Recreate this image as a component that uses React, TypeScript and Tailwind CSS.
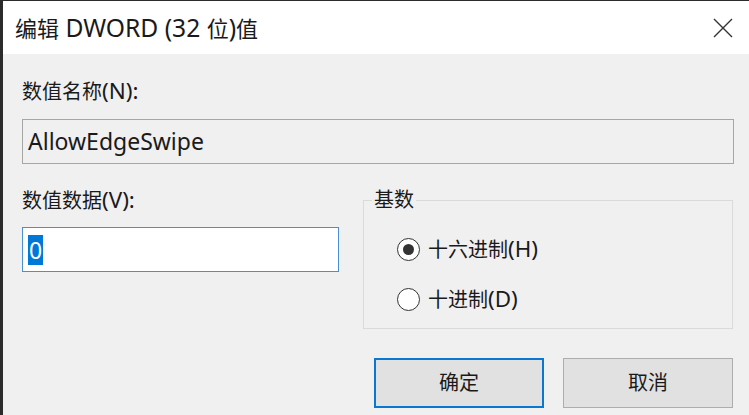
const font = "font-['Noto_Sans','Noto_Sans_CJK_SC','Liberation_Sans',sans-serif]";

// Latin runs are drawn a bit larger, the way Segoe UI sits beside YaHei
function L({ children }: { children: React.ReactNode }) {
  return <span className="text-[1.12em]">{children}</span>;
}

function Radio({ checked, cjk, hotkey }: { checked?: boolean; cjk: string; hotkey: string }) {
  return (
    <label className="flex items-center gap-[8px]">
      <span className="flex h-[23px] w-[23px] items-center justify-center rounded-full border-[1.5px] border-[#333333] bg-white">
        {checked ? <span className="h-[11px] w-[11px] rounded-full bg-[#333333]" /> : null}
      </span>
      <span className="text-[20px] leading-[28px] text-[#1a1a1a]">
        {cjk}
        <L>({hotkey})</L>
      </span>
    </label>
  );
}

export default function App() {
  return (
    <div
      className={`flex h-[415px] w-[749px] flex-col overflow-hidden border-l-[3px] border-t border-[#2b2b2b] bg-[#f0f0f0] ${font}`}
    >
      {/* title bar */}
      <div className="flex h-[53px] shrink-0 items-center justify-between bg-white pl-[12px] pr-[16px]">
        <span className="text-[22px] leading-[30px] text-[#1a1a1a]">
          编辑<L> DWORD (32 </L>位<L>)</L>值
        </span>
        <svg width="20" height="20" viewBox="0 0 20 20" className="text-[#333333]">
          <path d="M1 1 L19 19 M19 1 L1 19" stroke="currentColor" strokeWidth="1.4" fill="none" />
        </svg>
      </div>

      <div className="flex flex-1 flex-col pl-[19px] pr-[15px] pt-[23px]">
        <div className="text-[20px] leading-[28px] text-[#1a1a1a]">
          数值名称<L>(N):</L>
        </div>
        <div className="mt-[13px] flex h-[45px] items-center border border-[#a6a6a6] bg-[#f0f0f0] pl-[5px] text-[23px] text-[#1a1a1a]">
          AllowEdgeSwipe
        </div>

        <div className="mt-[22px] grid grid-cols-[317px_370px] gap-x-[24px]">
          <div className="flex flex-col">
            <div className="text-[20px] leading-[28px] text-[#1a1a1a]">
              数值数据<L>(V):</L>
            </div>
            <div className="mt-[12px] flex h-[45px] items-center border-[1.5px] border-[#4a90d0] bg-white pl-[5px]">
              <span className="bg-[#0078d7] px-[1px] text-[23px] leading-[30px] text-white">0</span>
            </div>
          </div>

          <fieldset className="h-[143px] border border-[#dadada]">
            <legend className="ml-[8px] px-[2px] text-[20px] leading-[28px] text-[#1a1a1a]">基数</legend>
            <div className="mt-[21px] flex flex-col gap-[21px] pl-[33px]">
              <Radio checked cjk="十六进制" hotkey="H" />
              <Radio cjk="十进制" hotkey="D" />
            </div>
          </fieldset>
        </div>

        <div className="mt-[29px] flex justify-end gap-[19px] pr-[1px]">
          <button className="h-[50px] w-[170px] border-[2.5px] border-[#0a78d2] bg-[#e1e1e1] text-[20px] text-[#1a1a1a]">
            确定
          </button>
          <button className="h-[50px] w-[170px] border border-[#adadad] bg-[#e1e1e1] text-[20px] text-[#1a1a1a]">
            取消
          </button>
        </div>
      </div>
    </div>
  );
}
